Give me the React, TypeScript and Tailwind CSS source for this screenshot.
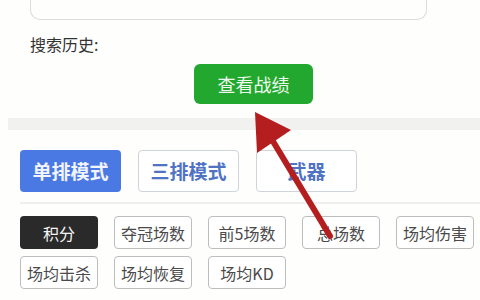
const tabs = ["单排模式", "三排模式", "武器"];
const chips = ["积分", "夺冠场数", "前5场数", "总场数", "场均伤害", "场均击杀", "场均恢复", "场均KD"];

export default function App() {
  return (
    <div
      className="relative w-[480px] h-[300px] overflow-hidden bg-[#fefefd]"
      style={{ fontFamily: '"Noto Sans CJK SC", "Noto Sans", sans-serif' }}
    >
      {/* search box (top cut off) */}
      <div className="ml-[30px] w-[397px] h-[20px] border-x border-b border-[#dcdcdc] rounded-b-[10px]" />

      <div className="mt-[14px] ml-[30px] text-[16px] leading-[20px] text-[#333]">搜索历史:</div>

      <div className="mt-[10px] ml-[194px] w-[119px] h-[40px] rounded-[6px] bg-[#23a82f] flex items-center justify-center text-[18px] text-[#eef8ee]">
        查看战绩
      </div>

      <div className="mt-[14px] ml-[8px] h-[12px] bg-[#f1f1f0]" />

      {/* mode tabs */}
      <div className="mt-[20px] pl-[20px] flex gap-[17px]">
        {tabs.map((t, i) => (
          <div
            key={t}
            className={`w-[101px] h-[42px] rounded-[4px] flex items-center justify-center text-[19px] font-bold ${
              i === 0
                ? "bg-[#4b79e4] text-[#f2f5fd]"
                : "bg-white border border-[#cfd3da] text-[#4f72c4]"
            }`}
          >
            {t}
          </div>
        ))}
      </div>

      <div className="mt-[10px] ml-[20px] h-[2px] bg-[#efefef]" />

      {/* stat chips */}
      <div className="mt-[12px] pl-[20px] flex flex-wrap w-[480px] gap-x-[16px] gap-y-[7px]">
        {chips.map((c, i) => (
          <div
            key={c}
            className={`w-[78px] h-[33px] rounded-[4px] flex items-center justify-center text-[16px] ${
              i === 0
                ? "bg-[#2a2a2a] text-[#f5f5f5]"
                : "bg-white border border-[#bdbdbd] text-[#4a4a4a]"
            }`}
          >
            {c}
          </div>
        ))}
      </div>

      {/* red arrow overlay */}
      <svg className="absolute left-0 top-0" width="480" height="300" viewBox="0 0 480 300">
        <line x1="268" y1="133" x2="330" y2="236" stroke="#b41e1e" strokeWidth="6" strokeLinecap="round" />
        <polygon points="255,112 291,130 257,153" fill="#b41e1e" />
      </svg>
    </div>
  );
}
